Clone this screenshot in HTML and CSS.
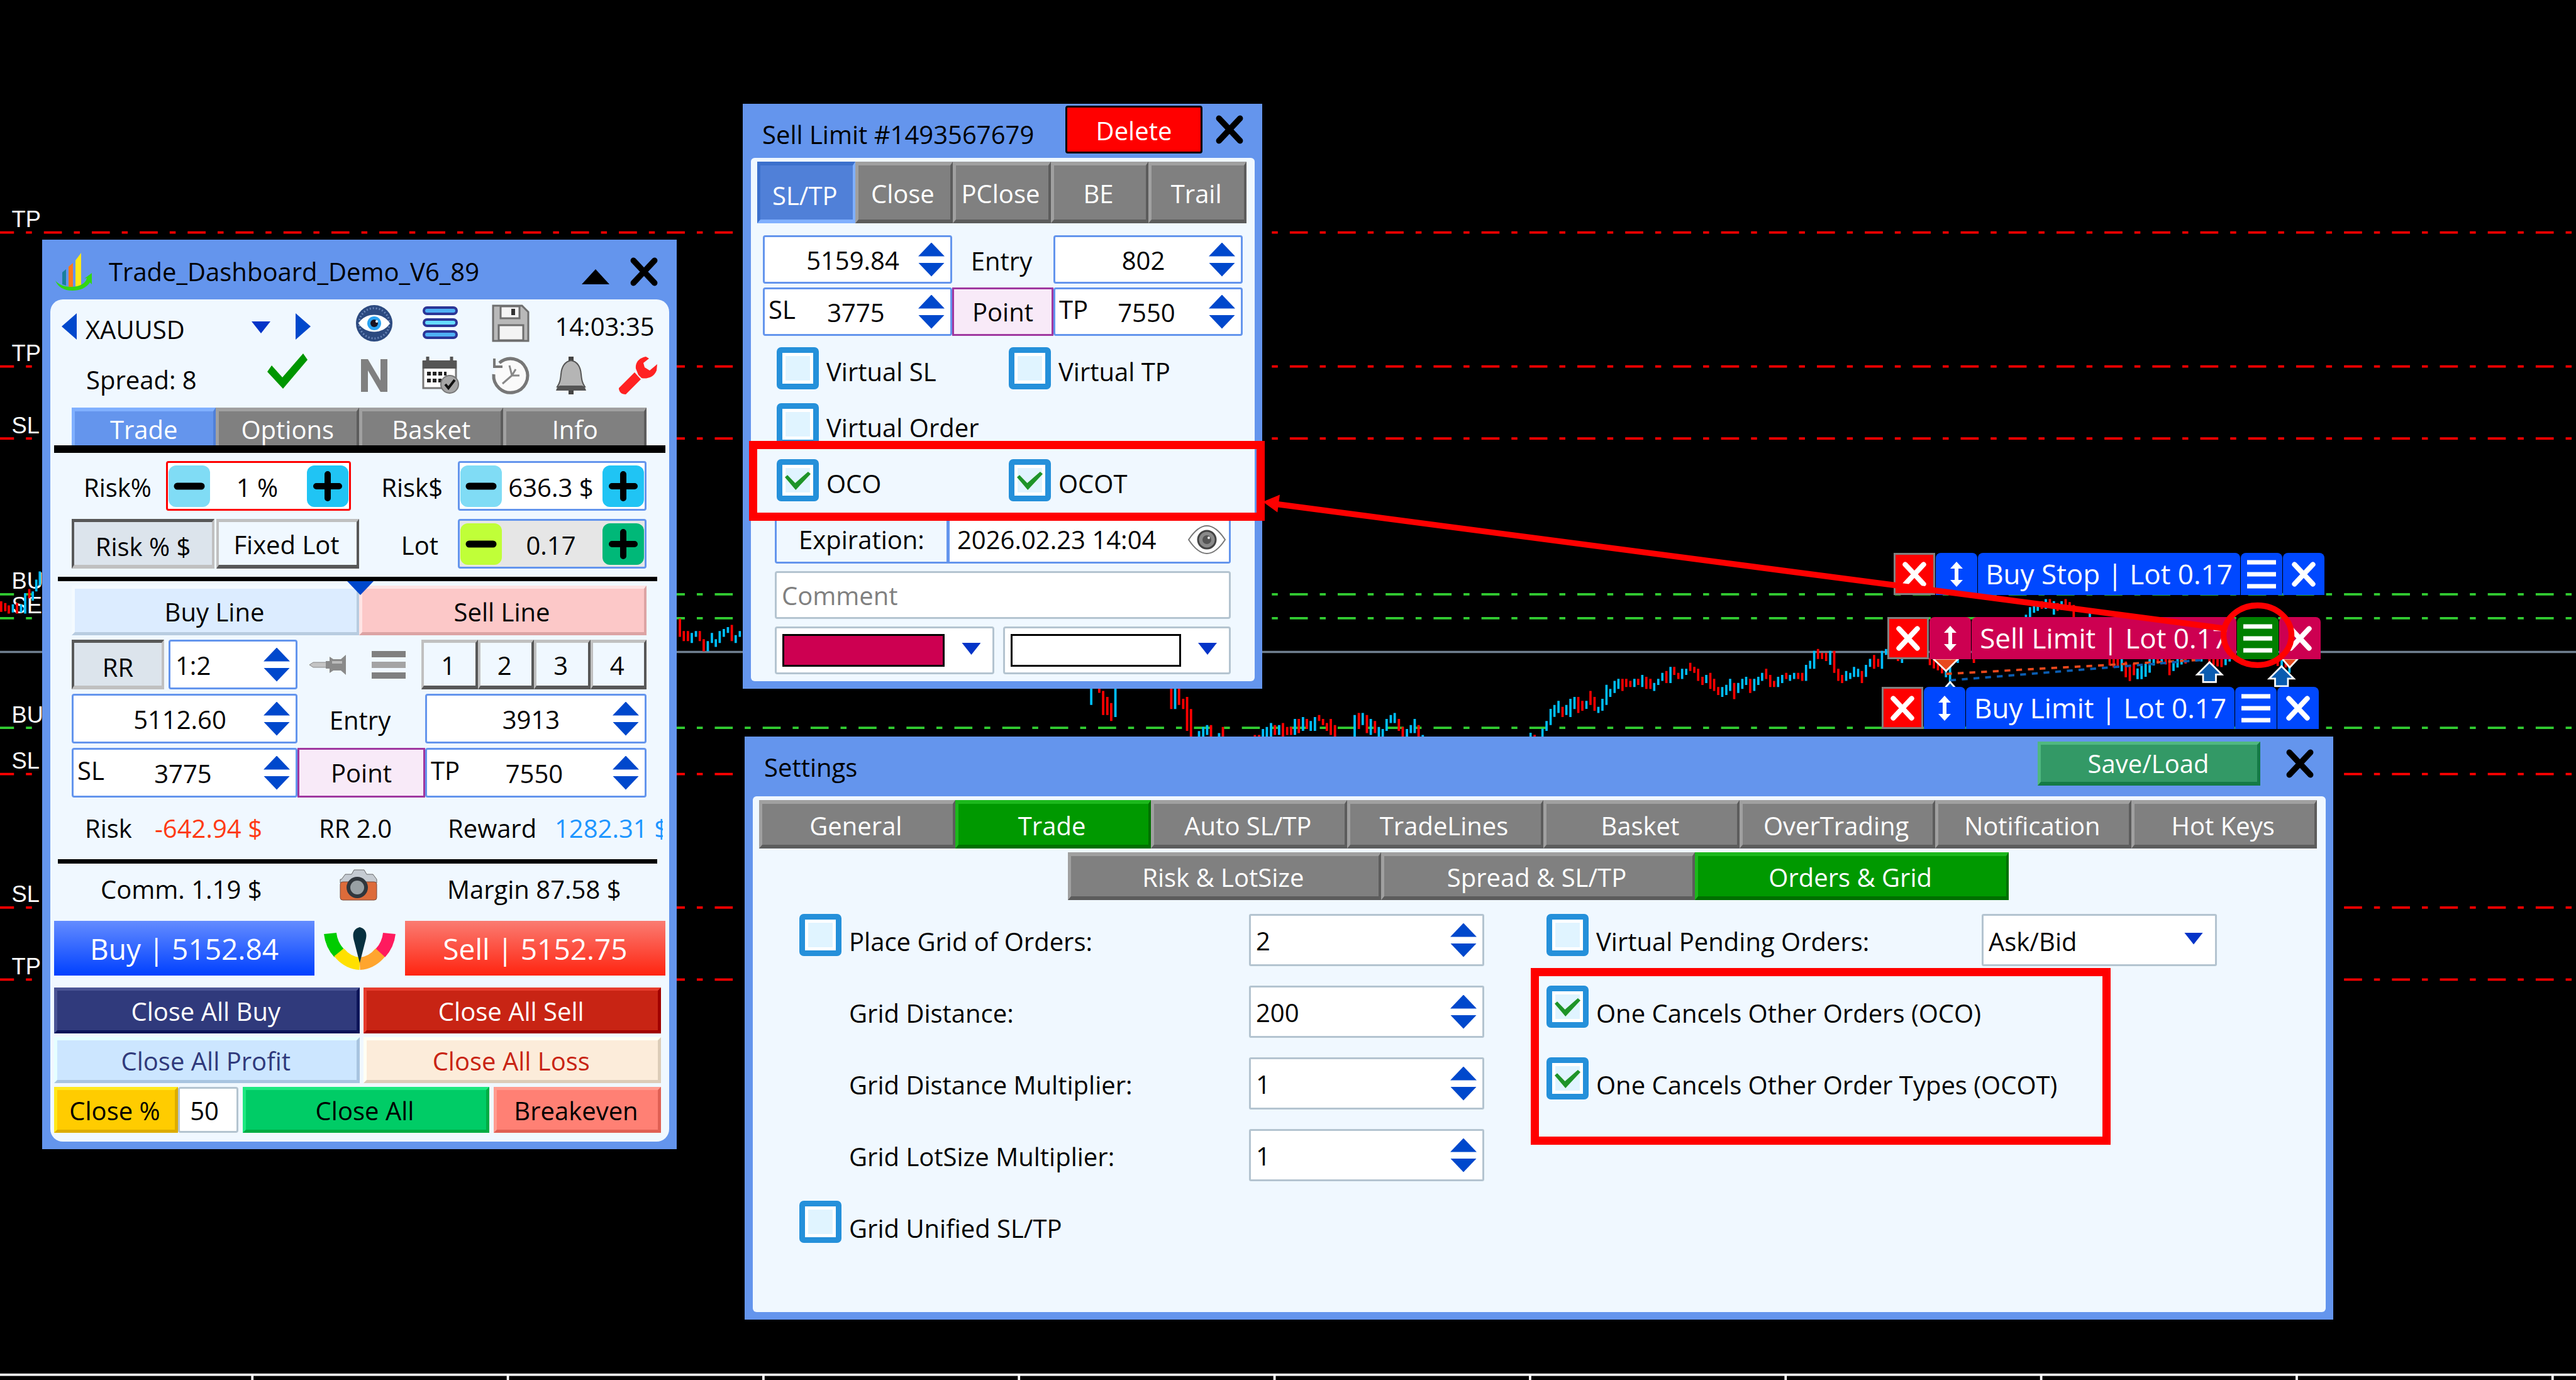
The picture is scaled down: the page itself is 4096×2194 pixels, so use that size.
FILE: index.html
```html
<!DOCTYPE html>
<html lang="en">
<head>
<meta charset="utf-8">
<meta name="viewport" content="width=device-width, initial-scale=1">
<title>Trade Dashboard</title>
<link rel="stylesheet" href="styles.css">
</head>
<body>
<svg class="defs" aria-hidden="true">
  <defs>
    <symbol id="i-close" viewBox="0 0 44 44"><path d="M6 5 38 39M38 5 6 39" fill="none" stroke="currentColor" stroke-width="9" stroke-linecap="round"/></symbol>
    <symbol id="i-move" viewBox="0 0 24 42"><path d="M12 1 22 12H15V30H22L12 41 2 30H9V12H2Z" fill="currentColor"/></symbol>
    <symbol id="i-menu" viewBox="0 0 46 46"><path d="M0 4H46M0 23H46M0 42H46" stroke="currentColor" stroke-width="7"/></symbol>
    <symbol id="i-minus" viewBox="0 0 66 66"><path d="M14 33H52" stroke="currentColor" stroke-width="11" stroke-linecap="round"/></symbol>
    <symbol id="i-plus" viewBox="0 0 66 66"><path d="M15 33H51M33 14V52" stroke="currentColor" stroke-width="10" stroke-linecap="round"/></symbol>
  </defs>
</svg>
<main class="desktop">
  <svg class="chart" viewBox="0 0 4400 2357" preserveAspectRatio="none" role="img" aria-label="XAUUSD price chart">
    <g class="level level-sl">
      <path d="M-6.9 397H4400M-6.9 626H4400M-6.9 749H4400M-6.9 1322H4400M-6.9 1550H4400M-6.9 1673H4400"/>
    </g>
    <g class="level level-order"><path d="M-6.9 1015H4400M-6.9 1056H4400M-6.9 1243H4400"/></g>
    <path class="price-line" d="M0 1113.5H4400"/>
    <g class="labels">
      <text x="20" y="388">TP</text><text x="20" y="617">TP</text><text x="20" y="740">SL</text>
      <text x="20" y="1006">BUY</text><text x="20" y="1047">SELL</text><text x="20" y="1234">BUY</text>
      <text x="20" y="1313">SL</text><text x="20" y="1541">SL</text><text x="20" y="1664">TP</text>
    </g>
    <g class="bars">
      <path class="bar-down" d="M2 1027V1045M9 1030V1044M15 1034V1048M29 1030V1048M50 1006V1022"/>
      <path class="bar-up" d="M22 1032V1046M36 1032V1046M43 1013V1048M56 1010V1026M62 990V1010M68 976V1000"/>
      <g stroke-width="12" transform="translate(1130 980) scale(.3333)">
        <path class="bar-down" d="M94 230V323M114 293V345M135 293V345M196 293V345M216 335V397M360 262V345"/>
        <path class="bar-up" d="M155 303V355M176 293V323M237 345V397M258 303V355M278 335V375M298 293V355M319 283V323M340 273V303M380 314V355M401 293V323"/>
      </g>
      <g stroke-width="8" transform="translate(1820 1160) scale(.5102 .3333)">
        <path class="bar-down" d="M113 49V70M126 60V184M140 91V184M153 122V214M354 49V153M380 49V132M394 101V153M407 91V265M420 153V300M487 235V300M527 245V300M634 286V300M648 286V300M701 235V286M728 225V300M742 245V286M755 245V286M781 204V276M808 204V255M849 184V214M862 204V235M875 225V265M888 204V286M902 235V300M982 173V255M1009 184V276M1036 214V276M1116 204V265M1129 245V300M1182 235V300"/>
        <path class="bar-up" d="M86 49V132M167 49V194M367 49V153M447 266V300M461 245V300M474 235V286M514 276V300M661 255V300M674 245V300M688 225V300M715 235V286M768 204V286M795 194V265M821 214V265M835 194V265M968 184V300M995 173V235M1022 204V286M1049 245V300M1062 255V300M1075 204V265M1089 184V225M1102 173V225M1143 255V300M1156 235V276M1169 204V276M1196 286V300"/>
      </g>
      <g stroke-width="9" transform="translate(2600 1060) scale(.4337 .3333)">
        <path class="bar-down" d="M49 585V600M159 442V494M221 391V473M237 411V462M269 360V432M285 391V462M395 298V360M410 298V340M426 309V340M457 298V330M489 288V350M505 298V350M568 258V320M599 237V278M615 268V299M662 216V258M678 237V268M693 247V309M710 288V330M741 268V350M756 298V360M772 340V381M835 319V402M898 298V371M961 247V299M977 278V340M992 309V340M1040 268V299M1087 268V299M1103 268V309M1165 145V197M1181 165V197M1197 165V207M1229 155V268M1245 247V309M1260 278V320M1338 258V320M1386 176V247M1402 196V237M1480 180V207"/>
        <path class="bar-up" d="M33 575V600M80 553V600M96 514V565M112 452V535M127 432V493M143 411V473M174 432V484M190 401V494M206 391V453M253 411V452M300 442V473M316 401V462M332 329V432M347 350V391M364 309V371M379 298V350M442 298V340M473 278V340M520 319V360M536 298V330M552 268V309M584 237V320M630 247V299M646 247V278M725 278V320M788 340V391M804 329V381M819 298V360M851 319V371M867 298V350M882 288V330M914 298V360M930 288V330M945 268V309M1008 288V340M1024 278V320M1055 278V309M1071 268V299M1118 227V309M1134 206V247M1150 155V247M1213 155V227M1276 258V309M1292 268V299M1307 237V289M1323 247V289M1354 227V289M1370 196V237M1417 155V247M1433 145V176M1496 180V217"/>
      </g>
      <g stroke-width="7" transform="translate(3150 900) scale(.574 .3333)">
        <path class="bar-down" d="M588 380V420M612 370V405M635 390V430M659 370V415M671 385V415M683 400V466M255 670V708M267 670V725M279 670V735M291 670V750M386 670V697M790 670V710M802 670V720M814 670V720M838 690V770M850 710V790M862 700V760M933 670V700M957 670V705M968 670V760M1016 670V700M1087 670V710M1099 670V708M1111 670V715M1123 670V718M1290 670V712M1314 690V720"/>
        <path class="bar-up" d="M541 450V466M553 411V466M565 405V440M576 395V430M600 370V420M624 380V450M647 380V425M731 440V466M303 680V770M315 670V795M338 670V697M826 670V740M873 725V780M885 710V780M897 700V768M909 670V747M921 670V710M945 670V700M980 690V738M992 670V720M1004 670V705M1063 670V690M1135 670V708M1147 670V690M1302 680V740M1325 700V748"/>
      </g>
    </g>
    <g class="trades">
      <path class="trade-sell" d="M3324 1151 3758 1127"/>
      <path class="trade-buy" d="M3331 1162 3764 1127"/>
      <g class="mark-sell"><path d="M3302 1125H3345L3324 1146ZM3898 1125H3925L3911 1140Z"/></g>
      <g class="mark-buy">
        <path d="M3774 1131 3795 1152H3785V1165H3763V1152H3753Z"/>
        <path d="M3897 1138 3918 1159H3908V1172H3886V1159H3876Z"/>
        <path d="M3331 1165 3339 1174V1180H3323V1174Z"/>
      </g>
    </g>
    <path class="axis" d="M0 2348H4400"/>
    <path class="ticks" d="M431 2348V2357M867.500 2348V2357M1304 2348V2357M1740.500 2348V2357M2177 2348V2357M2613.500 2348V2357M3050 2348V2357M3486.500 2348V2357M3923 2348V2357M4360 2348V2357"/>
  </svg>

  <div class="tag tag-stop">
    <button class="tag-x" aria-label="Close"><svg><use href="#i-close"/></svg></button>
    <button class="tag-part" aria-label="Move"><svg class="move"><use href="#i-move"/></svg></button>
    <span class="tag-part tag-text">Buy Stop | Lot 0.17</span>
    <button class="tag-part" aria-label="Menu"><svg class="burger"><use href="#i-menu"/></svg></button>
    <button class="tag-part" aria-label="Delete"><svg><use href="#i-close"/></svg></button>
  </div>
  <div class="tag tag-sell">
    <button class="tag-x" aria-label="Close"><svg><use href="#i-close"/></svg></button>
    <button class="tag-part" aria-label="Move"><svg class="move"><use href="#i-move"/></svg></button>
    <span class="tag-part tag-text">Sell Limit | Lot 0.17</span>
    <button class="tag-part tag-open" aria-label="Menu"><svg class="burger"><use href="#i-menu"/></svg></button>
    <button class="tag-part" aria-label="Delete"><svg><use href="#i-close"/></svg></button>
  </div>
  <div class="tag tag-limit">
    <button class="tag-x" aria-label="Close"><svg><use href="#i-close"/></svg></button>
    <button class="tag-part" aria-label="Move"><svg class="move"><use href="#i-move"/></svg></button>
    <span class="tag-part tag-text">Buy Limit | Lot 0.17</span>
    <button class="tag-part" aria-label="Menu"><svg class="burger"><use href="#i-menu"/></svg></button>
    <button class="tag-part" aria-label="Delete"><svg><use href="#i-close"/></svg></button>
  </div>

  <section class="window dashboard">
    <header class="titlebar">
      <svg class="logo" viewBox="0 0 60 60"><path d="M12 31 18 26V52L12 50Z" fill="#1a7f9c"/><path d="M22 22 29 16V54H22Z" fill="#ff7a1a"/><path d="M33 12 42 0V52L33 54Z" fill="#ffe81a"/><path d="M1 44C6 50 14 54 26 54 40 54 50 48 51 40L47 41 59 32V50L56 47C50 56 40 60 28 60 14 60 5 54 1 44Z" fill="#32d714"/></svg>
      <h1>Trade_Dashboard_Demo_V6_89</h1>
      <button class="bare" aria-label="Collapse"><svg class="collapse" viewBox="0 0 44 24"><path d="M0 24 22 0 44 24Z"/></svg></button>
      <button class="bare" aria-label="Close"><svg class="x"><use href="#i-close"/></svg></button>
    </header>
    <div class="panel">
      <div class="toolbar">
        <div class="symbol">
          <button class="bare" aria-label="Previous"><svg class="step" viewBox="0 0 24 42"><path d="M24 0V42L0 21Z" fill="#0048cc"/></svg></button>
          <span class="select plain"><select aria-label="Symbol"><option>XAUUSD</option></select></span>
          <button class="bare" aria-label="Next"><svg class="step" viewBox="0 0 24 42"><path d="M0 0V42L24 21Z" fill="#0048cc"/></svg></button>
        </div>
        <button class="bare top" aria-label="View"><svg class="icon" viewBox="0 0 60 60"><circle cx="30" cy="30" r="29" fill="#2c4a80"/><circle cx="30" cy="30" r="24" fill="none" stroke="#6a86b8" stroke-width="3" stroke-dasharray="2 3"/><path d="M5 30C16 12 44 12 55 30 44 48 16 48 5 30Z" fill="#fff"/><circle cx="30" cy="30" r="11" fill="#2aa3f2"/><circle cx="30" cy="30" r="6" fill="#1a1420"/><circle cx="34" cy="27" r="2" fill="#fff"/></svg></button>
        <button class="bare top" aria-label="Lines"><svg class="icon" viewBox="0 0 60 60"><g fill="#4fb0f5" stroke="#2b3596" stroke-width="4"><rect x="4" y="5" width="52" height="10" rx="5"/><rect x="4" y="24" width="52" height="10" rx="5" fill="#66dcff"/><rect x="4" y="43" width="52" height="10" rx="5"/></g></svg></button>
        <button class="bare top" aria-label="Save"><svg class="icon" viewBox="0 0 60 60"><path d="M2 2H48L58 12V58H2Z" fill="#b9b9b9" stroke="#6e6e6e" stroke-width="3"/><path d="M14 3H44V22H14Z" fill="#f4f4f4" stroke="#6e6e6e" stroke-width="3"/><path d="M31 7H37V17H31Z" fill="#333"/><path d="M11 33H50V57H11Z" fill="#f4f4f4" stroke="#6e6e6e" stroke-width="3"/></svg></button>
        <time class="clock">14:03:35</time>
        <div class="spread"><span>Spread: 8</span><svg class="ok" viewBox="0 0 66 58"><path d="M1 30 8 20 25 39 58 1 65 11 26 57Z" fill="#009600"/></svg></div>
        <button class="bare" aria-label="News"><svg class="icon" viewBox="0 0 60 60"><path d="M9 56V4H20L40 38V4H51V56H40L20 22V56Z" fill="#808080"/></svg></button>
        <button class="bare" aria-label="Calendar"><svg class="icon" viewBox="0 0 60 60"><path d="M3 8H55V50H3Z" fill="#fff" stroke="#777" stroke-width="3"/><path d="M2 6H56V19H2Z" fill="#555"/><path d="M10 0V11M48 0V11" stroke="#555" stroke-width="5"/><path d="M9 27H40M9 38H32" stroke="#222" stroke-width="6" stroke-dasharray="6 3"/><circle cx="45" cy="44" r="14" fill="#a5a5a5" stroke="#777" stroke-width="2"/><path d="M38 44 43 50 53 37" fill="none" stroke="#111" stroke-width="4"/></svg></button>
        <button class="bare" aria-label="History"><svg class="icon" viewBox="0 0 60 60"><path d="M12 10A27 27 0 1 1 3 28" fill="#fafafa" stroke="#777" stroke-width="5"/><path d="M4 3V16H17" fill="none" stroke="#777" stroke-width="4"/><path d="M17 43 32 30 28 14M32 30 44 30M32 30 38 20" fill="none" stroke="#888" stroke-width="3"/></svg></button>
        <button class="bare" aria-label="Alerts"><svg class="icon" viewBox="0 0 60 60"><path d="M30 0V10M30 52V60" stroke="#444" stroke-width="8"/><path d="M30 6C20 8 15 16 14 28 13 38 12 42 8 48H52C48 42 47 38 46 28 45 16 40 8 30 6Z" fill="#b5b5b5" stroke="#555" stroke-width="2"/><path d="M6 54C8 48 10 47 12 46H48C50 47 52 48 54 54Z" fill="#555"/></svg></button>
        <button class="bare tools" aria-label="Tools"><svg class="icon" viewBox="0 0 60 60"><path d="M43 0C32 2 26 9 27 19L31 29 36 34C44 36 56 33 60 22L61 12 49 22 41 17 39 10 48 3Z" fill="#ff2222"/><path d="M25 25 35 36 11 60C4 60 0 56 0 50Z" fill="#ff2222"/></svg></button>
      </div>
      <nav class="tabs main-tabs">
        <button class="tab active-blue">Trade</button><button class="tab">Options</button><button class="tab">Basket</button><button class="tab">Info</button>
      </nav>
      <hr class="thick">
      <div class="row">
        <label class="risk-label" for="riskp">Risk%</label>
        <div class="stepper red"><button class="less" aria-label="Less"><svg><use href="#i-minus"/></svg></button><input id="riskp" value="1 %"><button class="more" aria-label="More"><svg><use href="#i-plus"/></svg></button></div>
        <label class="right-label" for="riskd">Risk$</label>
        <div class="stepper"><button class="less" aria-label="Less"><svg><use href="#i-minus"/></svg></button><input id="riskd" value="636.3 $"><button class="more" aria-label="More"><svg><use href="#i-plus"/></svg></button></div>
      </div>
      <div class="row gap-s">
        <button class="bevel pressed w-mode">Risk % $</button>
        <button class="bevel w-mode">Fixed Lot</button>
        <label class="right-label lot-label" for="lot">Lot</label>
        <div class="stepper lot"><button class="less" aria-label="Less"><svg><use href="#i-minus"/></svg></button><input id="lot" value="0.17"><button class="more" aria-label="More"><svg><use href="#i-plus"/></svg></button></div>
      </div>
      <hr class="thin">
      <div class="row lines"><button class="line-buy">Buy Line</button><button class="line-sell">Sell Line</button></div>
      <div class="row tight">
        <button class="bevel pressed w-rr">RR</button>
        <div class="spin w-ratio left"><input aria-label="Ratio" value="1:2"><span class="arrows"><button class="up" aria-label="Up"></button><button class="dn" aria-label="Down"></button></span></div>
        <div class="mini">
          <svg class="pin" viewBox="0 0 60 32"><path d="M0 16 6 12H28V20H6Z" fill="#c4c4c4" stroke="#888"/><path d="M26 10H32V3L38 7H50L58 0V32L50 25H38L32 29V22H26Z" fill="#8a8a8a"/><path d="M36 12H52" stroke="#bbb" stroke-width="4"/></svg>
          <svg class="list" viewBox="0 0 54 48"><path d="M0 7H54M0 41H54" stroke="#808080" stroke-width="10"/><path d="M0 24H54" stroke="#a4a4a4" stroke-width="10"/></svg>
        </div>
        <div class="nums"><button class="bevel">1</button><button class="bevel">2</button><button class="bevel">3</button><button class="bevel">4</button></div>
      </div>
      <div class="row tight">
        <div class="spin w-price"><input aria-label="Entry price" value="5112.60"><span class="arrows"><button class="up" aria-label="Up"></button><button class="dn" aria-label="Down"></button></span></div>
        <span class="mid">Entry</span>
        <div class="spin grow"><input aria-label="Entry points" value="3913"><span class="arrows"><button class="up" aria-label="Up"></button><button class="dn" aria-label="Down"></button></span></div>
      </div>
      <div class="row tight">
        <div class="spin w-price tagged"><label for="sl">SL</label><input id="sl" value="3775"><span class="arrows"><button class="up" aria-label="Up"></button><button class="dn" aria-label="Down"></button></span></div>
        <button class="mid point">Point</button>
        <div class="spin grow tagged"><label for="tp">TP</label><input id="tp" value="7550"><span class="arrows"><button class="up" aria-label="Up"></button><button class="dn" aria-label="Down"></button></span></div>
      </div>
      <div class="stats"><span>Risk</span><span class="loss">-642.94 $</span><span>RR 2.0</span><span>Reward</span><span class="gain">1282.31 $</span></div>
      <hr class="thin flush">
      <div class="costs">
        <span>Comm. 1.19 $</span>
        <svg class="camera" viewBox="0 0 62 50"><path d="M4 16 10 8H20L24 1H40L44 8H54L60 16V22H2V16Z" fill="#c5cbd2" stroke="#666"/><rect x="2" y="20" width="58" height="29" rx="4" fill="#dd6b3a" stroke="#7a4a3a"/><circle cx="29" cy="29" r="17" fill="#30363c"/><circle cx="29" cy="29" r="11" fill="#98a0a4"/></svg>
        <span>Margin 87.58 $</span>
      </div>
      <div class="deal">
        <button class="buy">Buy | 5152.84</button>
        <svg class="gauge" viewBox="0 0 114 68"><g fill="none" stroke-width="20"><path d="M10 10Q12 28 24 41" stroke="#00cc00"/><path d="M24 40Q38 57 57 58" stroke="#ffe000"/><path d="M57 58Q76 57 90 40" stroke="#ffa52e"/><path d="M90 41Q102 28 104 10" stroke="#ff1a5e"/></g><path d="M57 0C68 3 69 12 66 22L57 57 48 22C45 12 46 3 57 0Z" fill="#06303f"/></svg>
        <button class="sell">Sell | 5152.75</button>
      </div>
      <div class="closers">
        <button class="c-buy">Close All Buy</button><button class="c-sell">Close All Sell</button>
        <button class="c-profit">Close All Profit</button><button class="c-loss">Close All Loss</button>
      </div>
      <div class="final">
        <button class="c-pct">Close %</button><input class="pct" aria-label="Percent" value="50">
        <button class="c-all">Close All</button><button class="c-be">Breakeven</button>
      </div>
    </div>
  </section>

  <section class="window order">
    <header class="titlebar">
      <h2>Sell Limit #1493567679</h2>
      <button class="delete">Delete</button>
      <button class="bare" aria-label="Close"><svg class="x"><use href="#i-close"/></svg></button>
    </header>
    <div class="panel">
      <nav class="tabs order-tabs">
        <button class="tab active-in">SL/TP</button><button class="tab">Close</button><button class="tab">PClose</button><button class="tab">BE</button><button class="tab">Trail</button>
      </nav>
      <div class="fields">
        <div class="spin"><input aria-label="Order price" value="5159.84"><span class="arrows"><button class="up" aria-label="Up"></button><button class="dn" aria-label="Down"></button></span></div>
        <span class="mid">Entry</span>
        <div class="spin"><input aria-label="Order points" value="802"><span class="arrows"><button class="up" aria-label="Up"></button><button class="dn" aria-label="Down"></button></span></div>
        <div class="spin tagged"><label for="osl">SL</label><input id="osl" value="3775"><span class="arrows"><button class="up" aria-label="Up"></button><button class="dn" aria-label="Down"></button></span></div>
        <button class="mid point">Point</button>
        <div class="spin tagged"><label for="otp">TP</label><input id="otp" value="7550"><span class="arrows"><button class="up" aria-label="Up"></button><button class="dn" aria-label="Down"></button></span></div>
      </div>
      <div class="checks">
        <label class="check"><input type="checkbox"><span>Virtual SL</span></label>
        <label class="check"><input type="checkbox"><span>Virtual TP</span></label>
        <label class="check wide"><input type="checkbox"><span>Virtual Order</span></label>
        <label class="check"><input type="checkbox" checked><span>OCO</span></label>
        <label class="check"><input type="checkbox" checked><span>OCOT</span></label>
      </div>
      <div class="extras">
        <div class="expiry">
          <label for="exp">Expiration:</label>
          <div class="date"><input id="exp" value="2026.02.23 14:04"><svg class="peek" viewBox="0 0 60 48"><path d="M1 24Q30-20 59 24 30 68 1 24Z" fill="#fff" stroke="#777" stroke-width="2"/><circle cx="30" cy="24" r="14" fill="#8a8a8a" stroke="#444" stroke-width="3"/><circle cx="30" cy="24" r="7" fill="#555"/><circle cx="33" cy="21" r="2" fill="#eee"/></svg></div>
        </div>
        <input class="comment" aria-label="Comment" placeholder="Comment">
        <div class="colors">
          <span class="select color"><i class="swatch swatch-line"></i><select aria-label="Line color"></select></span>
          <span class="select color"><i class="swatch swatch-text"></i><select aria-label="Text color"></select></span>
        </div>
      </div>
    </div>
    <i class="callout callout-order"></i>
  </section>

  <section class="window settings">
    <header class="titlebar">
      <h2>Settings</h2>
      <button class="save">Save/Load</button>
      <button class="bare" aria-label="Close"><svg class="x"><use href="#i-close"/></svg></button>
    </header>
    <div class="panel">
      <nav class="tabs set-tabs">
        <button class="tab">General</button><button class="tab active-green">Trade</button><button class="tab">Auto SL/TP</button><button class="tab">TradeLines</button><button class="tab">Basket</button><button class="tab">OverTrading</button><button class="tab">Notification</button><button class="tab">Hot Keys</button>
      </nav>
      <nav class="tabs sub-tabs">
        <button class="tab">Risk &amp; LotSize</button><button class="tab">Spread &amp; SL/TP</button><button class="tab active-green">Orders &amp; Grid</button>
      </nav>
      <div class="options">
        <div class="col">
          <div class="opt"><input type="checkbox" id="grid"><label for="grid">Place Grid of Orders:</label><div class="spin soft left"><input aria-label="Orders in grid" value="2"><span class="arrows"><button class="up" aria-label="Up"></button><button class="dn" aria-label="Down"></button></span></div></div>
          <div class="opt inset"><label for="gd">Grid Distance:</label><div class="spin soft left"><input id="gd" value="200"><span class="arrows"><button class="up" aria-label="Up"></button><button class="dn" aria-label="Down"></button></span></div></div>
          <div class="opt inset"><label for="gm">Grid Distance Multiplier:</label><div class="spin soft left"><input id="gm" value="1"><span class="arrows"><button class="up" aria-label="Up"></button><button class="dn" aria-label="Down"></button></span></div></div>
          <div class="opt inset"><label for="gl">Grid LotSize Multiplier:</label><div class="spin soft left"><input id="gl" value="1"><span class="arrows"><button class="up" aria-label="Up"></button><button class="dn" aria-label="Down"></button></span></div></div>
          <div class="opt"><input type="checkbox" id="gu"><label for="gu">Grid Unified SL/TP</label></div>
        </div>
        <div class="col">
          <div class="opt"><input type="checkbox" id="vp"><label for="vp">Virtual Pending Orders:</label><span class="select soft"><select aria-label="Price side"><option>Ask/Bid</option></select></span></div>
          <div class="opt"><input type="checkbox" id="oco" checked><label for="oco">One Cancels Other Orders (OCO)</label></div>
          <div class="opt"><input type="checkbox" id="ocot" checked><label for="ocot">One Cancels Other Order Types (OCOT)</label></div>
          <i class="callout callout-oco"></i>
        </div>
      </div>
    </div>
  </section>

  <svg class="marks" viewBox="0 0 4400 2357" preserveAspectRatio="none" aria-hidden="true">
    <path d="M2180 861 3797 1073" fill="none" stroke="#f00" stroke-width="10"/>
    <path d="M2157 857 2186 845 2182 875Z" fill="#f00"/>
    <ellipse cx="3856" cy="1085" rx="58" ry="51" fill="none" stroke="#f00" stroke-width="10"/>
  </svg>
</main>
</body>
</html>
```
FILE: styles.css
```css
* { box-sizing: border-box; }
body {
  margin: 0;
  background: #000;
  color: #000;
  font: 40px/52px "Open Sans", "Noto Sans", sans-serif;
}
button, input, select { font: inherit; color: inherit; margin: 0; padding: 0; border: 0; background: none; border-radius: 0; min-width: 0; }
button { white-space: nowrap; }
h1, h2 { margin: 0; font: inherit; flex: 1; white-space: nowrap; }
svg { display: block; }
.defs { position: absolute; width: 0; height: 0; }
.desktop { position: relative; min-height: 100vh; overflow: hidden; }
.chart, .marks { position: absolute; inset: 0; width: 100%; height: 100%; }
.marks { pointer-events: none; }

/* chart */
.level { fill: none; stroke-width: 4; stroke-dasharray: 30.8 20.4 10.2 20.45; }
.level-sl { stroke: #f00; }
.level-order { stroke: #32cd32; }
.price-line { stroke: #708090; stroke-width: 4; }
.labels { fill: #fff; font: 39px "Liberation Sans", sans-serif; }
.bars { fill: none; stroke-width: 4; }
.bar-down { stroke: #f00; }
.bar-up { stroke: #00bfff; }
.trades { stroke-width: 3; }
.trade-sell, .trade-buy { stroke-width: 4; stroke-dasharray: 10 10; }
.trade-sell { stroke: #e8481c; }
.trade-buy { stroke: #0a5cb0; }
.mark-sell { fill: #e8481c; stroke: #fff; }
.mark-buy { fill: #0a5cb0; stroke: #fff; }
.axis { stroke: #fff; stroke-width: 4; }
.ticks { stroke: #fff; stroke-width: 4; }

/* order tags */
.tag { position: absolute; display: flex; height: 67px; gap: 1px; color: #fff; font-size: 44px; }
.tag-stop { left: 3011px; top: 879px; width: 685px; --tag: #0048ff; }
.tag-sell { left: 3001px; top: 981px; width: 689px; --tag: #cd0051; }
.tag-limit { left: 2992px; top: 1092px; width: 695px; --tag: #0048ff; }
.tag > * { display: flex; align-items: center; justify-content: center; width: 66px; }
.tag-part { background: var(--tag); border-radius: 8px 8px 0 0; }
.tag-x { background: #f00; border: 3px solid #808080; }
.tag .tag-text { flex: 1; white-space: nowrap; padding-bottom: 2px; }
.tag-open { background: #008000; }
.tag svg { width: 40px; height: 40px; }
.tag svg.move { width: 24px; height: 42px; }
.tag svg.burger { width: 46px; height: 46px; }

/* windows */
.window { position: absolute; padding: 0 12px 12px 13px; background: #6495ed; }
.dashboard { left: 67px; top: 381px; width: 1009px; }
.order { left: 1181px; top: 165px; width: 826px; }
.settings { left: 1184px; top: 1171px; width: 2526px; }
.panel { background: #f0f8ff; border-radius: 20px; }
.order .panel, .settings .panel { border-radius: 6px; }
.titlebar { display: flex; align-items: center; height: 95px; }
.bare { display: flex; align-items: center; justify-content: center; }
.x { width: 46px; height: 46px; }
.dashboard .titlebar { padding: 6px 17px 0 7px; gap: 32px; }
.logo { width: 60px; height: 60px; }
.dashboard h1 { margin-left: -6px; }
.collapse { width: 44px; height: 24px; margin-top: 16px; }
.order .titlebar { height: 86px; padding: 0 17px 4px 18px; gap: 20px; }
.order h2 { padding-top: 16px; }
.delete { width: 218px; height: 76px; background: #f00; color: #fff; border: 3px solid #000; border-radius: 4px; padding-top: 4px; }
.settings .titlebar { padding: 0 18px 10px; gap: 40px; }
.settings h2 { padding-top: 12px; }
.save { width: 354px; height: 70px; background: #339966; color: #fff; border-style: solid; border-width: 5px 5px 6px; border-color: #50b880 #147a46 #147a46 #50b880; padding: 2px 2px 0 0; }

/* toolbar */
.toolbar { display: grid; grid-template-columns: 468px 94px 116px 107px 86px 1fr; grid-auto-rows: 70px; row-gap: 8px; padding-top: 8px; }
.symbol { display: flex; align-items: center; padding-left: 18px; }
.symbol .select { width: 294px; margin: 0 40px 0 14px; }
.step { width: 24px; height: 42px; }
.top { align-self: start; }
.icon { width: 60px; height: 60px; overflow: visible; }
.clock { grid-column: span 2; align-self: center; text-align: center; padding-right: 6px; }
.tools { padding-left: 12px; }
.spread { display: flex; align-items: center; padding-left: 57px; }
.spread span { flex: 1; padding-top: 14px; }
.ok { width: 66px; height: 58px; margin: 0 58px 14px 0; }

/* drop-downs */
.select { position: relative; display: block; background: #fff; }
.select.plain { background: none; }
.select select { width: 100%; height: 100%; appearance: none; outline: 0; }
.select.plain select { padding-top: 10px; }
.select::after { content: ""; position: absolute; right: 19px; top: 50%; width: 30px; height: 19px; margin-top: -12px; background: #0434c8; clip-path: polygon(0 0, 100% 0, 50% 100%); pointer-events: none; }
.select.plain::after { right: 0; margin-top: -8px; }

/* tabs */
.tabs { display: flex; color: #fff; }
.tab { flex: 1; display: flex; align-items: center; justify-content: center; padding: 4px 5px 0 0; background: #808080; border-style: solid; border-width: 6px 4px 6px 5px; border-color: #a0a0a0 #5c5c5c #5c5c5c #a0a0a0; }
.main-tabs { height: 60px; margin: 16px 36px 0 34px; }
.main-tabs .tab { border-bottom: 0; padding-right: 0; }
.tab.active-blue { background: #6495ed; border-color: #80b0ff #5080d8 #5080d8 #80b0ff; }
.tab.active-in { background: #5080d8; border-color: #3c70cc #80b0ff #80b0ff #3c70cc; padding-top: 10px; }
.tab.active-green { background: #009900; border-color: #1cb81c #007000 #007000 #1cb81c; }
.order-tabs { height: 98px; padding: 0 13px 0 10px; }
.order .panel { padding: 6px 0 11px; }
.settings .panel { padding: 6px 14px 94px 10px; }
.set-tabs { display: grid; grid-template-columns: repeat(7, 312fr) 295fr; height: 77px; }
.sub-tabs { width: 1496px; max-width: 100%; height: 76px; margin: 6px auto 0; }

hr { border: 0; margin: 0; background: #000; }
.thick { height: 12px; margin: 0 6px 13px; }
.thin { height: 7px; margin: 13px 19px 0 12px; }
.thin.flush { margin-top: 0; }

/* dashboard rows */
.row { display: flex; height: 79px; margin: 0 36px 0 34px; }
.gap-s { margin-top: 13px; }
.tight { margin-top: 7px; }
.risk-label { width: 150px; padding: 4px 0 0 19px; align-self: center; }
.right-label { flex: 1; text-align: right; padding: 4px 24px 0 0; align-self: center; }
.right-label.lot-label { padding-right: 31px; }
.stepper { display: flex; align-items: center; width: 300px; padding: 0 1px; background: #fff; border: 3px solid #6495ed; border-radius: 4px; }
.stepper.red { width: 294px; border-color: #f00; }
.stepper input { flex: 1; width: 0; text-align: center; padding: 4px 4px 0 0; }
.stepper button { width: 66px; height: 66px; border-radius: 12px; background: #80dcf5; }
.stepper svg { width: 66px; height: 66px; }
.stepper .more { background: #20c4f4; }
.lot { background: #e6e6e6; }
.lot .less { background: #c0ff38; }
.lot .more { background: #00b878; }
.bevel { background: #f0f8ff; border-style: solid; border-width: 5px 4px 6px; border-color: #c0c0c0 #585858 #585858 #c0c0c0; padding: 4px 4px 0 0; }
.pressed { background: #dce4ec; border-color: #585858 #c0c0c0 #c0c0c0 #585858; padding: 10px 0 0; }
.w-mode { width: 227px; margin-right: 3px; }
.lines { position: relative; margin-top: 7px; }
.lines::before { content: ""; position: absolute; left: 438px; top: -7px; width: 42px; height: 22px; background: #0048cc; clip-path: polygon(0 0, 100% 0, 50% 100%); }
.lines button { flex: 1; border-style: solid; border-width: 5px 4px 5px 5px; padding: 4px 4px 0 0; }
.line-buy { background: #dcecff; border-color: #f4faff #b8cce0 #b8cce0 #f4faff; }
.line-sell { background: #fcc8c8; border-color: #ffe4e4 #dca4a4 #dca4a4 #ffe4e4; }
.w-rr { width: 147px; margin-right: 7px; }
.w-ratio { width: 205px; }
.mini { flex: 1; display: flex; align-items: center; justify-content: space-between; padding: 0 25px 0 19px; }
.pin { width: 60px; height: 32px; }
.list { width: 54px; height: 48px; }
.nums { display: grid; grid-template-columns: repeat(4, 1fr); width: 358px; }
.w-price { width: 359px; }
.grow { flex: 1; }
.mid { width: 203px; display: flex; align-items: center; justify-content: center; padding: 4px 4px 0 0; }
.mid.point { padding: 0; }
.point { background: #f8eaf8; border: 3px solid #a038a0; }

/* number fields */
.spin { display: flex; align-items: center; background: #fff; border: 3px solid #6495ed; border-radius: 4px; }
.spin.soft, .select.soft { width: 374px; height: 83px; border: 3px solid #b4c4d0; border-radius: 3px; }
.spin input { flex: 1; width: 0; height: 100%; padding: 2px 0 0 36px; text-align: center; }
.spin.left input { padding-left: 8px; text-align: left; }
.spin.tagged input { padding-left: 0; }
.spin label { width: 46px; padding: 0 0 8px 6px; }
.arrows { display: flex; flex-direction: column; gap: 10px; width: 51px; }
.arrows button { width: 42px; height: 22px; background: #0048cc; }
.arrows .up { clip-path: polygon(50% 0, 100% 100%, 0 100%); }
.arrows .dn { clip-path: polygon(0 0, 100% 0, 50% 100%); }

.stats { display: grid; grid-template-columns: 111px 261px 205px 170px 172px; align-items: center; height: 98px; padding-left: 55px; margin-right: 10px; white-space: nowrap; overflow: hidden; }
.loss { color: #ff3a14; }
.gain { color: #1e96ff; }
.costs { display: grid; grid-template-columns: 324px 62px 1fr; column-gap: 55px; height: 82px; align-items: center; padding-left: 80px; }
.costs span:last-child { padding-left: 55px; }
.camera { width: 62px; height: 50px; margin-bottom: 14px; }
.deal { display: flex; align-items: center; justify-content: space-between; height: 87px; margin: 9px 6px 0; color: #fff; font-size: 46px; }
.deal button { width: 414px; height: 100%; }
.buy { background: linear-gradient(#648cff, #0040ff); }
.sell { background: linear-gradient(#fa7c72, #ff2410); }
.gauge { width: 114px; height: 68px; }
.closers { display: grid; grid-template-columns: 487fr 473fr; gap: 6px; margin: 19px 13px 0 6px; grid-auto-rows: 73px; }
.closers button, .final button { border-style: solid; border-width: 5px; padding: 2px 4px 0 0; }
.c-buy { background: #303a7c; color: #fff; border-color: #4a5494 #0c1458 #0c1458 #4a5494; }
.c-sell { background: #c82414; color: #fff; border-color: #e63c2c #a00000 #a00000 #e63c2c; }
.c-profit { background: #cce6ff; color: #303a7c; border-color: #e6ffff #a8c4e0 #a8c4e0 #e6ffff; }
.c-loss { background: #fcecda; color: #c82414; border-color: #fffff4 #dcccb8 #dcccb8 #fffff4; }
.final { display: flex; height: 73px; margin: 6px 13px 0 6px; }
.dashboard .panel { padding-bottom: 14px; }
.c-pct { width: 197px; background: #ffcc00; border-color: #ffe81c #dcac00 #dcac00 #ffe81c; }
.pct { width: 96px; margin-right: 7px; padding: 2px 12px 0 0; background: #fff; border: 3px solid #b4c4d0; border-radius: 4px; text-align: center; }
.c-all { flex: 1; background: #00cc66; border-color: #1ce880 #00ac44 #00ac44 #1ce880; }
.c-be { width: 266px; margin-left: 7px; background: #ff8074; border-color: #ff9c90 #e06054 #e06054 #ff9c90; }

/* order window */
.fields { display: grid; grid-template-columns: 301px 1fr 301px; grid-auto-rows: 77px; row-gap: 6px; margin: 19px 19px 0; }
.fields .mid { width: auto; }
.checks { display: grid; grid-template-columns: 369px 1fr; row-gap: 22px; margin: 18px 0 0 41px; }
.check { display: flex; gap: 12px; }
.check span { padding-top: 13px; }
.wide { grid-column: span 2; }
input[type="checkbox"] { position: relative; flex: none; width: 67px; height: 67px; appearance: none; border: 9px solid #2590da; border-radius: 7px; background: #e0f4ff; box-shadow: inset 0 0 0 5px #fff; }
input[type="checkbox"]:checked::after { content: ""; position: absolute; left: 4px; top: 11px; width: 41px; height: 29px; background: #1e9428; clip-path: polygon(0 30%, 10% 18%, 40% 62%, 90% 0, 100% 12%, 42% 100%); }
.extras { display: grid; gap: 12px; grid-auto-rows: 76px; margin: 23px 38px 0; }
.expiry { display: flex; border: 3px solid #6495ed; border-radius: 4px; }
.expiry label { width: 270px; display: flex; align-items: center; justify-content: center; }
.date { flex: 1; display: flex; align-items: center; padding: 0 5px 0 12px; background: #fff; border-left: 5px solid #6495ed; }
.date input { flex: 1; width: 0; }
.peek { width: 60px; height: 48px; }
.comment { width: 100%; padding: 2px 0 0 8px; background: #fff; border: 3px solid #b4c4d0; border-radius: 4px; }
.comment::placeholder { color: #808080; opacity: 1; }
.colors { display: grid; grid-template-columns: 349fr 361fr; gap: 14px; }
.color { border: 3px solid #b4c4d0; border-radius: 4px; }
.swatch { position: absolute; left: 9px; right: 76px; top: 9px; bottom: 9px; border: 3px solid #000; pointer-events: none; }
.swatch-line { background: #cd0051; }
.swatch-text { background: #fff; }

/* settings window */
.options { display: flex; gap: 99px; margin: 22px 0 0 64px; }
.col { position: relative; width: 1089px; display: grid; grid-auto-rows: 83px; row-gap: 31px; align-content: start; }
.col + .col { width: 1066px; }
.opt { display: flex; }
.opt label { flex: 1; align-self: center; padding: 4px 0 0 12px; }
.opt.inset { padding-left: 67px; }
.select.soft select { padding: 4px 0 0 8px; }

/* call-outs */
.callout { position: absolute; border: 13px solid #f00; pointer-events: none; }
.callout-order { left: 10px; top: 536px; width: 820px; height: 127px; }
.callout-oco { left: -25px; top: 86px; width: 922px; height: 281px; }
```
